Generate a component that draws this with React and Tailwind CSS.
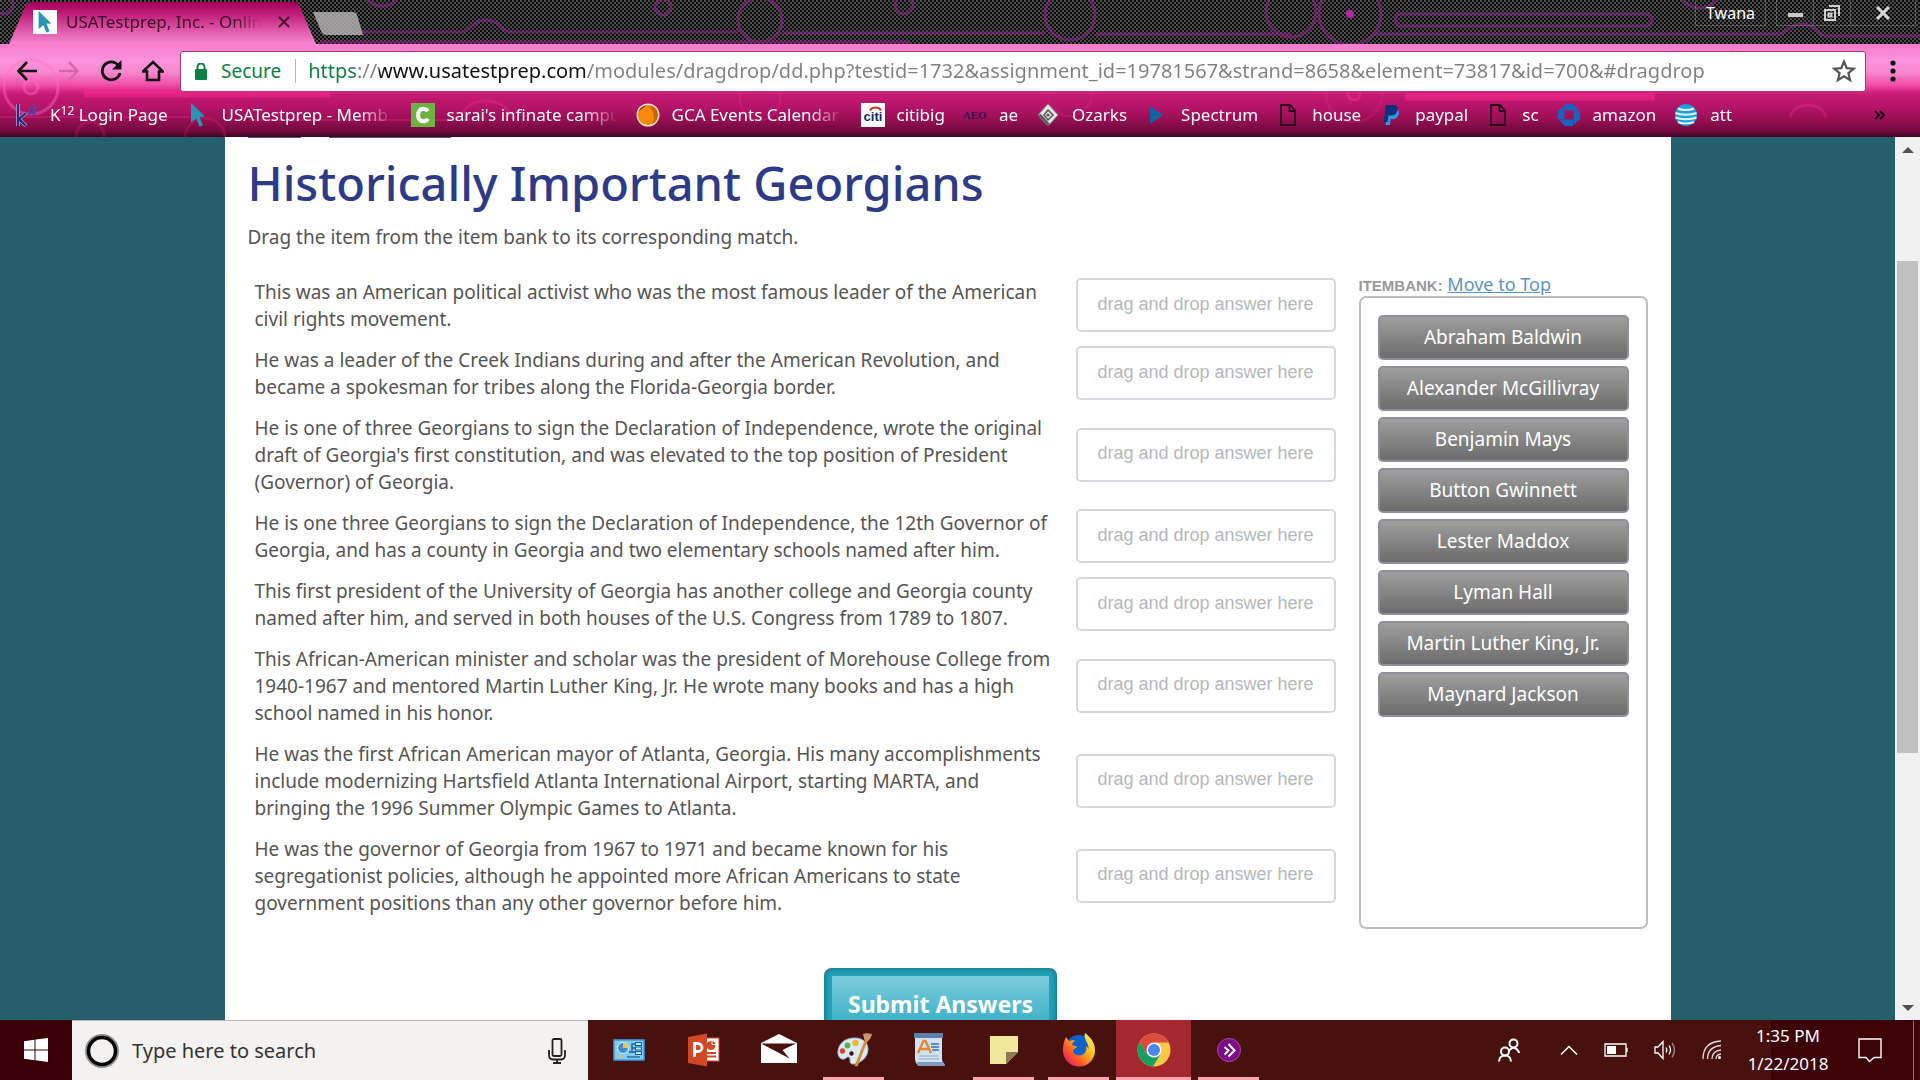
import React, { useState } from 'react';

const questions = [
    'This was an American political activist who was the most famous leader of the American civil rights movement.',
    'He was a leader of the Creek Indians during and after the American Revolution, and became a spokesman for tribes along the Florida-Georgia border.',
    "He is one of three Georgians to sign the Declaration of Independence, wrote the original draft of Georgia's first constitution, and was elevated to the top position of President (Governor) of Georgia.",
    'He is one three Georgians to sign the Declaration of Independence, the 12th Governor of Georgia, and has a county in Georgia and two elementary schools named after him.',
    'This first president of the University of Georgia has another college and Georgia county named after him, and served in both houses of the U.S. Congress from 1789 to 1807.',
    'This African-American minister and scholar was the president of Morehouse College from 1940-1967 and mentored Martin Luther King, Jr. He wrote many books and has a high school named in his honor.',
    'He was the first African American mayor of Atlanta, Georgia. His many accomplishments include modernizing Hartsfield Atlanta International Airport, starting MARTA, and bringing the 1996 Summer Olympic Games to Atlanta.',
    'He was the governor of Georgia from 1967 to 1971 and became known for his segregationist policies, although he appointed more African Americans to state government positions than any other governor before him.',
];

const people = [
    'Abraham Baldwin',
    'Alexander McGillivray',
    'Benjamin Mays',
    'Button Gwinnett',
    'Lester Maddox',
    'Lyman Hall',
    'Martin Luther King, Jr.',
    'Maynard Jackson',
];

const CursorIcon = ({ className }) => (
    <svg viewBox="0 0 16 24" className={className} fill="#2795b5">
        <path d="M1 0 15 13.5 9.6 14 13 22.2 9.6 23.8 6.2 15.6 1 19.5z" />
    </svg>
);

const K12Icon = () => (
    <svg viewBox="0 0 24 24" className="w-6 h-6">
        <g fill="none" stroke="#f3d4ee" strokeWidth="3.600">
            <path d="M4 1v22M12 10l-7 6 7 7" />
        </g>
        <g fill="none" stroke="#2b2a7c" strokeWidth="2.600">
            <path d="M4 1v22M12 10l-7 6 7 7" />
        </g>
        <path d="M14.500 11l2-7M18 5.500q4-3 4 0 0 2-4.500 5h4.500" fill="none" stroke="#4a46b0" strokeWidth="1.800" />
    </svg>
);

const CampusIcon = () => (
    <svg viewBox="0 0 24 24" className="w-6 h-6">
        <rect width="24" height="24" fill="#6db33f" />
        <path d="M17 8.200C16 6 11 4.600 8.700 7.300 6.600 9.800 6.600 14.500 8.800 16.900c2.300 2.500 7 1.500 8.200-1" fill="none" stroke="#fff" strokeWidth="4" />
    </svg>
);

const OrangeIcon = () => (
    <svg viewBox="0 0 24 24" className="w-6 h-6">
        <circle cx="12" cy="12" r="10.500" fill="#f58a0b" />
        <path d="M12 1.500a10.500 10.500 0 0 1 4 20c3-5 3-13-4-20z" fill="#c8660a" />
        <path d="M2 9a10.500 10.500 0 0 1 10-7.500L8 4z" fill="#5c3a12" />
        <circle cx="12" cy="12" r="10.800" fill="none" stroke="#f6e3c2" strokeWidth="1.400" />
    </svg>
);

const CitiIcon = () => (
    <svg viewBox="0 0 24 24" className="w-6 h-6">
        <rect width="24" height="24" fill="#fff" />
        <text x="12" y="18" textAnchor="middle" fontFamily="Liberation Sans, sans-serif" fontWeight="700" fontSize="13" fill="#12286b">citi</text>
        <path d="M9 7.500c2-4 9-4 11 0" fill="none" stroke="#d9291c" strokeWidth="2" />
    </svg>
);

const AeoIcon = () => (
    <svg viewBox="0 0 24 24" className="w-6 h-6">
        <text x="12" y="16" textAnchor="middle" fontFamily="Liberation Serif, serif" fontSize="11" fontWeight="700" fill="#26184f">AEO</text>
    </svg>
);

const OzarksIcon = () => (
    <svg viewBox="0 0 24 24" className="w-6 h-6">
        <path d="M12 1 22 12 12 23 2 12z" fill="#e4e4e4" stroke="#8c8c8c" />
        <path d="M2 12 12 23l2-2L5 11z" fill="#5d5d5d" />
        <path d="M12 7l5 5-5 5-4-5z" fill="none" stroke="#555" strokeWidth="1.500" />
        <circle cx="12" cy="12" r="1.600" fill="#555" />
    </svg>
);

const SpectrumIcon = () => (
    <svg viewBox="0 0 24 24" className="w-6 h-6"><path d="M5 3 18 12 5 21z" fill="#0f65a3" /></svg>
);

const PageIcon = () => (
    <svg viewBox="0 0 24 24" className="w-6 h-6" fill="none" stroke="#2a0a1c" strokeWidth="1.800">
        <path d="M5 2h9l5 5.500V22H5z" />
        <path d="M13.500 2v6H19" />
    </svg>
);

const PaypalIcon = () => (
    <svg viewBox="0 0 24 24" className="w-6 h-6">
        <path d="M8.500 6h8c3 0 4 2.500 3.200 5.500-.8 3-3 4.500-6 4.500h-2L11 22H6.500z" fill="#2a9be0" />
        <path d="M7 2h7.500c3.500 0 4.800 2.300 4 5.500-.9 3.400-3.200 5-6.500 5H9.500L8.500 19H4.500z" fill="#12307a" />
    </svg>
);

const ChaseIcon = () => (
    <svg viewBox="0 0 24 24" className="w-6 h-6" fill="#1663c0">
        <path d="M8 1h8l6 6.500H8z" />
        <path d="M23 8v8l-6.500 6V8z" />
        <path d="M16 23H8l-6-6.500h14z" />
        <path d="M1 16V8l6.500-6v14z" />
    </svg>
);

const AttIcon = () => (
    <svg viewBox="0 0 24 24" className="w-6 h-6">
        <circle cx="12" cy="12" r="11" fill="#1aa3dc" />
        <g fill="none" stroke="#e9f8ff" strokeWidth="2">
            <path d="M4 5.500c4 2 11 2 16 0M1.500 10c5 2.300 15 2.300 21 0M1.500 14.500c5 2.300 15 2.300 21 0M4 19c4 1.800 11 1.800 16 0" />
        </g>
    </svg>
);

const bookmarks = [
    { label: 'USATestprep - Memb', icon: <CursorIcon className="w-4 h-6" />, fade: true },
    { label: "sarai's infinate campu", icon: <CampusIcon />, fade: true },
    { label: 'GCA Events Calendar', icon: <OrangeIcon />, fade: true },
    { label: 'citibig', icon: <CitiIcon /> },
    { label: 'ae', icon: <AeoIcon /> },
    { label: 'Ozarks', icon: <OzarksIcon /> },
    { label: 'Spectrum', icon: <SpectrumIcon /> },
    { label: 'house', icon: <PageIcon /> },
    { label: 'paypal', icon: <PaypalIcon /> },
    { label: 'sc', icon: <PageIcon /> },
    { label: 'amazon', icon: <ChaseIcon /> },
    { label: 'att', icon: <AttIcon /> },
];

function StripArt() {
    return (
        <svg className="absolute inset-0 w-full h-full" aria-hidden="true">
            <defs>
                <pattern id="carbon" width="4" height="4" patternUnits="userSpaceOnUse">
                    <rect width="4" height="4" fill="#0c0c0c" />
                    <rect width="2" height="2" fill="#4c4c4c" />
                    <rect x="2" y="2" width="2" height="2" fill="#4c4c4c" />
                </pattern>
                <linearGradient id="tab" x1="0" y1="0" x2="0" y2="1">
                    <stop offset="0" stopColor="#a3005c" />
                    <stop offset="0.3" stopColor="#c0207a" />
                    <stop offset="0.7" stopColor="#e25cad" />
                    <stop offset="1" stopColor="#f684cd" />
                </linearGradient>
            </defs>
            <rect width="100%" height="100%" fill="url(#carbon)" />
            <g fill="none" stroke="#8c2488" strokeWidth="3" opacity="0.6">
                <circle cx="4" cy="5" r="9" />
                <circle cx="382" cy="-14" r="20" />
                <path d="M360 32h102c8 0 10-12 24-12s16 12 24 12h228M783 33h262M1096 34h195" />
                <path d="M320 42h590" />
                <circle cx="663" cy="7" r="8" />
                <circle cx="904" cy="5" r="9" />
                <circle cx="760" cy="20" r="22" />
                <circle cx="1070" cy="15" r="25" />
                <circle cx="1291" cy="12" r="25" />
                <circle cx="1350" cy="14" r="31" />
                <path d="M1398 14h250q8 6 0 12h-250q-6-6 0-12z" />
                <path d="M1372 34h408c6 0 8-10 22-10s16 12 24 12h94" />
                <circle cx="1700" cy="-14" r="22" />
            </g>
            <circle cx="1350" cy="14" r="4" fill="#b02aa8" />
            <path d="M9 44 25 7q2-5 7-5h263q3 0 5 5l16 37z" fill="url(#tab)" />
            <path d="M313 12h40q3 0 4 3l6 20h-37q-3 0-5-4z" fill="#b9b5b7" opacity="0.8" />
        </svg>
    );
}

function ToolbarArt() {
    return (
        <svg className="absolute inset-0 w-full h-full" fill="none" aria-hidden="true">
            <g stroke="#ff6fd0" strokeWidth="3" opacity="0.4">
                <circle cx="31" cy="43" r="27" />
                <circle cx="31" cy="43" r="7" />
                <circle cx="377" cy="0" r="31" />
                <circle cx="1702" cy="0" r="31" />
            </g>
            <g stroke="#ff2b93" opacity="0.5">
                <path d="M84 50h246M1405 53h250" strokeWidth="7" />
                <path d="M462 71q6-14 24-14t24 14M1790 73q4-12 18-12t18 12" strokeWidth="3" opacity="0.6" />
                <circle cx="760" cy="56" r="20" strokeWidth="2" opacity="0.5" />
                <circle cx="1070" cy="50" r="22" strokeWidth="2" opacity="0.4" />
                <circle cx="1354" cy="50" r="28" strokeWidth="3" opacity="0.4" />
                <circle cx="1354" cy="50" r="6" strokeWidth="3" />
                <path d="M0 73h190M250 76h220" strokeWidth="2" opacity="0.5" />
                <circle cx="90" cy="92" r="14" strokeWidth="3" opacity="0.4" />
                <circle cx="205" cy="94" r="20" strokeWidth="3" opacity="0.4" />
            </g>
        </svg>
    );
}

function TabStrip() {
    return (
        <div className="relative h-11 bg-black">
            <StripArt />
            <div className="relative flex h-11 items-start">
                <div className="flex items-center h-11 pl-[33px] w-[313px]">
                    <span className="flex items-center justify-center w-6 h-6 bg-white">
                        <CursorIcon className="w-4 h-[22px]" />
                    </span>
                    <span className="ml-[9px] w-[196px] whitespace-nowrap text-[17px] text-[#3b0a25] [mask-image:linear-gradient(to_left,transparent,black_30px)]">
                        USATestprep, Inc. - Onlin
                    </span>
                    <button aria-label="Close tab" className="ml-4">
                        <svg viewBox="0 0 12 12" className="w-3 h-3" stroke="#4a1030" strokeWidth="2"><path d="M1 1l10 10M11 1 1 11" /></svg>
                    </button>
                </div>
                <div className="ml-auto flex items-center h-[26px]">
                    <button className="h-[26px] px-[10px] border border-t-0 border-white/20 text-[16px] leading-[26px] text-white">Twana</button>
                    <div className="ml-[10px] mr-1 flex h-[26px] border-b border-x border-white/20">
                        <button aria-label="Minimize" className="w-[37px] flex items-center justify-center border-r border-white/20">
                            <span className="mt-1 w-[15px] h-1 bg-[#c9c9c9]" />
                        </button>
                        <button aria-label="Restore" className="w-[37px] flex items-center justify-center border-r border-white/20">
                            <svg viewBox="0 0 18 18" className="w-[18px] h-[18px]" fill="none" stroke="#cfcfcf" strokeWidth="2">
                                <path d="M2 6h10v10H2zM5.500 9.500h3v3h-3zM6 2h10v10" />
                            </svg>
                        </button>
                        <button aria-label="Close" className="w-[64px] flex items-center justify-center">
                            <svg viewBox="0 0 14 14" className="w-[14px] h-[14px]" stroke="#d4d4d4" strokeWidth="3"><path d="M1 1l12 12M13 1 1 13" /></svg>
                        </button>
                    </div>
                </div>
            </div>
        </div>
    );
}

function Toolbar() {
    return (
        <div className="relative flex items-center h-[54px] pl-4 pr-6">
            <button aria-label="Back" className="w-[22px]">
                <svg viewBox="0 0 22 22" className="w-[22px] h-[22px]" fill="none" stroke="#111" strokeWidth="2.600"><path d="M21 11H3M11 2 2.500 11 11 20" /></svg>
            </button>
            <button aria-label="Forward" className="ml-5 w-[22px]">
                <svg viewBox="0 0 22 22" className="w-[22px] h-[22px]" fill="none" stroke="#d567ad" strokeWidth="2.400"><path d="M1 11h18M11 2l8.500 9-8.500 9" /></svg>
            </button>
            <button aria-label="Reload" className="ml-5 w-[22px]">
                <svg viewBox="0 0 22 22" className="w-[22px] h-[22px]">
                    <path d="M18.500 5.500A9 9 0 1 0 20 13" fill="none" stroke="#111" strokeWidth="2.800" />
                    <path d="M21.500 0v9.500H12z" fill="#111" />
                </svg>
            </button>
            <button aria-label="Home" className="ml-5 w-[22px]">
                <svg viewBox="0 0 22 22" className="w-[22px] h-[22px]" fill="none" stroke="#111" strokeWidth="2.600"><path d="M1 11.500 11 2l10 9.500h-4V20H5v-8.500z" /></svg>
            </button>
            <div className="ml-4 flex flex-1 items-center h-[41px] rounded-[3px] border border-[#a23a78] bg-white pl-[14px] pr-[9px]">
                <svg viewBox="0 0 12 17" className="w-3 h-[17px]">
                    <rect y="6" width="12" height="11" rx="1" fill="#0b8043" />
                    <path d="M2.500 7V4a3.500 3.500 0 0 1 7 0v3" fill="none" stroke="#0b8043" strokeWidth="2" />
                </svg>
                <span className="ml-[14px] text-[19px] text-[#0b8043]">Secure</span>
                <span className="ml-[14px] mr-3 w-px h-6 bg-[#b5b5b5]" />
                <input
                    aria-label="Address"
                    readOnly
                    value="https://www.usatestprep.com/modules/dragdrop/dd.php?testid=1732&assignment_id=19781567&strand=8658&element=73817&id=700&#dragdrop"
                    className="flex-1 min-w-0 text-[20px] outline-none text-transparent bg-clip-text bg-[linear-gradient(to_right,#0b8043_49px,#808080_49px,#808080_71px,#111_71px,#111_278px,#808080_278px)]"
                />
                <button aria-label="Bookmark this page">
                    <svg viewBox="0 0 24 24" className="w-6 h-6" fill="none" stroke="#555" strokeWidth="2.200">
                        <path d="M12 2.500l2.700 6.600 7.100.5-5.400 4.600 1.700 6.900-6.100-3.700-6.100 3.700 1.700-6.900-5.400-4.600 7.100-.5z" />
                    </svg>
                </button>
            </div>
            <button aria-label="Menu" className="ml-6">
                <svg viewBox="0 0 6 22" className="w-[6px] h-[22px]" fill="#111"><circle cx="3" cy="3" r="2.600" /><circle cx="3" cy="11" r="2.600" /><circle cx="3" cy="19" r="2.600" /></svg>
            </button>
        </div>
    );
}

function BookmarksBar() {
    return (
        <nav className="relative flex items-center gap-[18px] h-[39px] pl-[14px] pr-[34px] pb-[6px] text-[17px] text-white">
            <a href="#k12" className="flex items-center gap-3 whitespace-nowrap">
                <K12Icon />
                <span>K<sup className="text-[12px]">12</sup> Login Page</span>
            </a>
            {bookmarks.map((b) => (
                <a key={b.label} href="#bookmark" className="flex items-center gap-3 whitespace-nowrap">
                    <span className="flex justify-center w-6">{b.icon}</span>
                    {b.fade ? (
                        <span className="w-[171px] [mask-image:linear-gradient(to_left,transparent,black_36px)]">{b.label}</span>
                    ) : (
                        <span>{b.label}</span>
                    )}
                </a>
            ))}
            <button aria-label="More bookmarks" className="ml-auto">
                <svg viewBox="0 0 12 10" className="w-3 h-[10px]" fill="none" stroke="#1a0511" strokeWidth="2"><path d="M1 1l4 4-4 4M6 1l4 4-4 4" /></svg>
            </button>
        </nav>
    );
}

function Scrollbar() {
    return (
        <div className="flex flex-col w-[25px] px-[2px] bg-[#f1f1f1]">
            <span className="flex items-center justify-center h-[25px]">
                <svg viewBox="0 0 12 6" className="w-3 h-[6px]" fill="#505050"><path d="M0 6 6 0l6 6z" /></svg>
            </span>
            <span className="flex-[99]" />
            <span className="flex-[492] bg-[#c1c1c1]" />
            <span className="flex-[242]" />
            <span className="flex items-center justify-center h-[25px]">
                <svg viewBox="0 0 12 6" className="w-3 h-[6px]" fill="#505050"><path d="M0 0l6 6 6-6z" /></svg>
            </span>
        </div>
    );
}

function Quiz() {
    const [answers, setAnswers] = useState({});

    const handleDrop = (e, index) => {
        e.preventDefault();
        const name = e.dataTransfer.getData('text/plain');
        setAnswers({ ...answers, [index]: name });
    };

    const used = Object.values(answers);

    return (
        <div className="w-full max-w-[1446px] mx-auto bg-white px-[23px] text-[19px] leading-[27px] text-[#555]">
            <div className="flex gap-7 h-px">
                <span className="w-[53px] bg-[#5a5560]" />
                <span className="w-[122px] bg-[#5a5560]" />
            </div>
            <h1 className="mt-[15px] text-[47px] leading-[60px] font-medium text-[#2d3a87]">Historically Important Georgians</h1>
            <p className="mt-[11px]">Drag the item from the item bank to its corresponding match.</p>

            <div className="mt-5 flex items-start gap-[17px]">
                <table className="flex-1">
                    <tbody>
                        {questions.map((q, i) => (
                            <tr key={i}>
                                <td className="pt-2 pb-[6px] pl-[7px] pr-[11px]">{q}</td>
                                <td className="w-[272px] px-[6px]">
                                    <div
                                        onDragOver={(e) => e.preventDefault()}
                                        onDrop={(e) => handleDrop(e, i)}
                                        className="flex items-center justify-center h-[54px] pb-[2px] rounded-[5px] border-2 border-[#d5d8de] font-['Liberation_Sans',sans-serif] text-[18px] text-[#b5b8ba]"
                                    >
                                        {answers[i] || 'drag and drop answer here'}
                                    </div>
                                </td>
                            </tr>
                        ))}
                    </tbody>
                </table>

                <div className="w-[289px] shrink-0">
                    <p className="h-[25px] text-[18px]">
                        <span className="font-['Liberation_Sans',sans-serif] text-[15px] font-bold text-[#999]">ITEMBANK:</span>{' '}
                        <a href="#top" className="text-[#5b93c7] underline">Move to Top</a>
                    </p>
                    <div className="flex flex-col gap-[6px] min-h-[633px] p-[17px] rounded-[7px] border-2 border-[#bdbdbd]">
                        {people.filter((p) => !used.includes(p)).map((p) => (
                            <button
                                key={p}
                                draggable
                                onDragStart={(e) => e.dataTransfer.setData('text/plain', p)}
                                className="h-[45px] rounded-[5px] border-2 border-[#8d8f9b] bg-linear-to-b from-[#9f9f9f] to-[#6c6c6c] text-white"
                            >
                                {p}
                            </button>
                        ))}
                    </div>
                </div>
            </div>

            <div className="mt-[39px] flex justify-center pr-[14px]">
                <button className="w-[233px] h-[72px] p-2 rounded-lg bg-[#22a3b9] shadow-[inset_0_0_6px_#14606e] text-[23px] font-bold text-white">
                    <span className="flex items-center justify-center h-full bg-linear-to-b from-[#7accdd] to-[#27abc4]">Submit Answers</span>
                </button>
            </div>
        </div>
    );
}

const ControlPanelIcon = () => (
    <svg viewBox="0 0 34 34" className="w-[34px] h-[34px]">
        <rect x="1" y="6" width="32" height="22" rx="1" fill="#2f7fb8" />
        <rect x="2.500" y="7.500" width="29" height="19" fill="#7fcdf5" />
        <circle cx="11" cy="15" r="5.500" fill="#3f8fd0" stroke="#e8f7ff" />
        <path d="M11 15V9.500A5.500 5.500 0 0 1 16.500 15z" fill="#f2c14b" />
        <path d="M17 19h3v-8h4M20 15h4M20 19h4" fill="none" stroke="#1c5f96" strokeWidth="1.300" />
        <g fill="#b8e6fb" stroke="#1c5f96"><rect x="23.500" y="9.500" width="6" height="3" /><rect x="23.500" y="14" width="6" height="3" /><rect x="23.500" y="18.500" width="6" height="3" /></g>
        <path d="M15 24h13" stroke="#2371ab" strokeWidth="1.500" />
        <circle cx="9" cy="23.500" r="1.500" fill="#f2c14b" />
    </svg>
);

const PowerPointIcon = () => (
    <svg viewBox="0 0 34 34" className="w-[34px] h-[34px]">
        <rect x="18" y="5" width="14" height="23" fill="#fff" stroke="#d24726" />
        <circle cx="24" cy="12.500" r="4.500" fill="#d24726" />
        <path d="M25 11.500V7.500a4 4 0 0 1 4 4z" fill="#d24726" stroke="#fff" />
        <path d="M20 20h9M20 23.500h9" stroke="#d24726" strokeWidth="1.800" />
        <path d="M1 4 20 .5v33L1 30z" fill="#d24726" />
        <path d="M7.500 24V10.500H11a3.700 3.700 0 0 1 0 8H7.500" fill="none" stroke="#fff" strokeWidth="2.800" />
    </svg>
);

const MailIcon = () => (
    <svg viewBox="0 0 36 34" className="w-9 h-[34px]">
        <path d="M0 10 18 1l18 9v20H0z" fill="#fff" />
        <path d="M0 10.500h35L21.500 17l7 8.500z" fill="#48110e" />
    </svg>
);

const PaintIcon = () => (
    <svg viewBox="0 0 36 34" className="w-9 h-[34px]">
        <path d="M2 18C3 9 11 4.500 20 5c7 .5 12 5 12 11 0 9-8 14-14 15-4 .5-4-2-4-5 0-2-2-3-4-1-3 3-9 0-8-7z" fill="#d9e9f5" stroke="#9db9cf" />
        <circle cx="15.500" cy="20.500" r="2.200" fill="#48110e" />
        <circle cx="6.500" cy="18" r="2.700" fill="#d8433b" />
        <circle cx="11.500" cy="12.500" r="2.900" fill="#58b04a" />
        <circle cx="19.500" cy="10" r="3.200" fill="#efb92c" />
        <path d="M29 6.500 18.500 33l3 .5L31.500 8z" fill="#d98a3a" />
        <path d="M27 1q4-1.500 9 0-1 5-4.500 7.500L28.500 7z" fill="#c79a6b" />
    </svg>
);

const WordPadIcon = () => (
    <svg viewBox="0 0 34 34" className="w-[34px] h-[34px]">
        <path d="M3 3h27v22q0 5 3 7H6q-3-2-3-7z" fill="#cfe3f4" />
        <path d="M2 0h29v5H2z" fill="#5e7fa8" />
        <path d="M5 29h26q2 2 2 4H6z" fill="#7d9cc0" />
        <path d="M6 20 11.500 8h2L19 20M8.500 16h8" fill="none" stroke="#e8872f" strokeWidth="2.400" />
        <path d="M19 11h8M19 14h8M20 17h7" stroke="#3c6fc0" strokeWidth="1.600" />
        <path d="M7 23h20M7 26h20" stroke="#9aa8b8" />
    </svg>
);

const StickyIcon = () => (
    <svg viewBox="0 0 28 28" className="w-7 h-7">
        <path d="M0 0h28v16L16 28H0z" fill="#f1e69a" />
        <path d="M16 16h12L16 28z" fill="#8c7a55" />
    </svg>
);

const FirefoxIcon = () => (
    <svg viewBox="0 0 34 34" className="w-[34px] h-[34px]">
        <defs>
            <linearGradient id="fox" x1="0.9" y1="0.1" x2="0.1" y2="0.9">
                <stop offset="0" stopColor="#fff14a" />
                <stop offset="0.4" stopColor="#ffb01f" />
                <stop offset="0.7" stopColor="#ff5a26" />
                <stop offset="1" stopColor="#e6196b" />
            </linearGradient>
        </defs>
        <circle cx="17" cy="16" r="14" fill="#0a63c9" />
        <path d="M23 0c5 4 10 9 10 17a16 16 0 0 1-32 1C1 12 2 8 4 4l3 4c2-1 4-1 6-.5-2 1.500-3 3-3 4.500l5 1.500c-.5 2-4 2.500-4 4.500 1 4 6 6 10 3.500 3-2 4-5 3-8.500 1.500 1 2 2 2.500 3C27 10 21 6 23 0z" fill="url(#fox)" />
    </svg>
);

const ChromeIcon = () => (
    <svg viewBox="0 0 34 34" className="w-[34px] h-[34px]">
        <circle cx="17" cy="17" r="16.500" fill="#fbc746" />
        <path d="M2.700 8.700A16.500 16.500 0 0 1 31.700 9.500H17L9.800 21z" fill="#db4a3f" />
        <path d="M2.700 8.700A16.500 16.500 0 0 0 16 33.500L23.500 21H10z" fill="#17a05d" />
        <circle cx="17" cy="17" r="7.500" fill="#fff" />
        <circle cx="17" cy="17" r="6" fill="#4a86ec" />
    </svg>
);

const ChevronAppIcon = () => (
    <svg viewBox="0 0 24 24" className="w-6 h-6" fill="none" stroke="#fff" strokeWidth="2">
        <circle cx="12" cy="12" r="11.500" fill="#7d0a86" stroke="#a84aa8" strokeWidth="1" />
        <path d="M7.500 9l4 3.500-4 4M11.500 6l6 6.500-6 6" />
    </svg>
);

const apps = [
    { name: 'Control Panel', icon: <ControlPanelIcon /> },
    { name: 'PowerPoint', icon: <PowerPointIcon /> },
    { name: 'Mail', icon: <MailIcon /> },
    { name: 'Paint', icon: <PaintIcon />, open: true },
    { name: 'WordPad', icon: <WordPadIcon /> },
    { name: 'Sticky Notes', icon: <StickyIcon />, open: true },
    { name: 'Firefox', icon: <FirefoxIcon />, open: true },
    { name: 'Chrome', icon: <ChromeIcon />, open: true, active: true },
    { name: 'Launcher', icon: <ChevronAppIcon />, open: true },
];

function Taskbar() {
    return (
        <footer className="flex h-[60px] shrink-0 bg-[linear-gradient(to_left,#3d0206_149px,#48110e_149px)]">
            <button aria-label="Start" className="w-[72px] flex items-center justify-center bg-[#3a0005]">
                <svg viewBox="0 0 24 24" className="w-6 h-6" fill="#fff">
                    <path d="M0 3.200 10.500 1.800V11.400H0zM11.500 1.600 24 0v11.400H11.500zM0 12.500h10.500v9.700L0 20.800zM11.500 12.500H24V24l-12.500-1.700z" />
                </svg>
            </button>
            <label className="flex w-[516px] items-center border-t border-[#c9b3b3] bg-[#f3f2f1] pl-[13px] pr-[22px]">
                <svg viewBox="0 0 34 34" className="w-[34px] h-[34px]" fill="none">
                    <circle cx="17" cy="17" r="15.500" stroke="#8f8f8f" strokeWidth="3" />
                    <circle cx="17" cy="17" r="13.500" stroke="#050505" strokeWidth="3.500" />
                </svg>
                <input type="search" aria-label="Search" placeholder="Type here to search" className="ml-[13px] flex-1 text-[20px] outline-none placeholder:text-[#333]" />
                <svg viewBox="0 0 18 26" className="w-[18px] h-[26px]" fill="none" stroke="#222" strokeWidth="1.800">
                    <rect x="4.500" y="1" width="9" height="17" rx="1.500" />
                    <path d="M1 12v5q0 4.500 4 4.500h8q4 0 4-4.500v-5M9 21.500V25M5 25h8" />
                </svg>
            </label>
            <div className="flex pl-[3px]">
                {apps.map((a) => (
                    <button key={a.name} aria-label={a.name} className={`relative w-[75px] flex items-center justify-center ${a.active ? 'bg-[#a3282f]' : ''}`}>
                        {a.icon}
                        {a.open && <span className={`absolute bottom-0 h-[3px] bg-[#ffa5ac] ${a.active ? 'inset-x-0' : 'inset-x-[7px]'}`} />}
                    </button>
                ))}
            </div>
            <div className="ml-auto flex items-center text-white">
                <div className="flex items-center gap-[26px]">
                    <svg viewBox="0 0 22 24" className="mr-[14px] w-[22px] h-6" fill="none" stroke="#fff" strokeWidth="2">
                        <circle cx="15.500" cy="5.500" r="4" />
                        <path d="M11 12.500q4.500-5 8.500-.5 1.500 1.500 1.500 3" />
                        <circle cx="7" cy="13.500" r="4" />
                        <path d="M1 23.500q.5-6 6-6t6 6" />
                    </svg>
                    <svg viewBox="0 0 18 10" className="w-[18px] h-[10px]" fill="none" stroke="#fff" strokeWidth="1.500"><path d="M1 9.500 9 1.500l8 8" /></svg>
                    <svg viewBox="0 0 24 14" className="w-6 h-[14px]" fill="none" stroke="#fff" strokeWidth="1.300">
                        <path d="M1 1h21v12H1zM23 5v4" />
                        <rect x="3" y="3" width="9" height="8" fill="#fff" stroke="none" />
                    </svg>
                    <svg viewBox="0 0 22 20" className="w-[22px] h-5" fill="none" stroke="#fff" strokeWidth="1.300">
                        <path d="M1 7h3l5-5.500v17L4 13H1zM12 7.500q1.500 2.500 0 5M15 5.500q3 4.500 0 9" />
                        <path d="M18 3q5 7 0 14" opacity="0.5" />
                    </svg>
                    <svg viewBox="0 0 20 20" className="w-5 h-5" fill="none" stroke="#fff" strokeWidth="1.300">
                        <path d="M1 19Q1 2 19 1M5.500 19Q5.500 7 19 5.500M10 19q0-8 9-9M14 19q0-4.500 5-5" opacity="0.85" />
                        <circle cx="17.500" cy="17.500" r="1.500" fill="#fff" stroke="none" />
                    </svg>
                </div>
                <time className="ml-[23px] w-[86px] text-center text-[17px] leading-7 whitespace-nowrap">1:35 PM<br />1/22/2018</time>
                <button aria-label="Notifications" className="ml-[27px]">
                    <svg viewBox="0 0 24 24" className="w-6 h-6" fill="none" stroke="#fff" strokeWidth="1.400"><path d="M1 1h22v18.500h-7L11.500 23.500 8 19.500H1z" /></svg>
                </button>
                <span className="ml-[31px] mr-[6px] w-px self-stretch bg-[#8f6f70]" />
            </div>
        </footer>
    );
}

export default function App() {
    return (
        <div className="flex flex-col h-screen overflow-hidden font-['Noto_Sans','Open_Sans',sans-serif]">
            <header className="shrink-0">
                <TabStrip />
                <div className="relative bg-[linear-gradient(#f57ccb,#fb93dc_18%,#f889cf_30%,#ee4fa6_44%,#dd2a88_50%,#c41a72_55%,#b41468_68%,#9c0f56_80%,#6f0a3c_94%,#3d0522)]">
                    <ToolbarArt />
                    <Toolbar />
                    <BookmarksBar />
                </div>
            </header>
            <main className="flex flex-1 min-h-0 bg-[#255f6d]">
                <div className="flex-1 overflow-hidden">
                    <Quiz />
                </div>
                <Scrollbar />
            </main>
            <Taskbar />
        </div>
    );
}
